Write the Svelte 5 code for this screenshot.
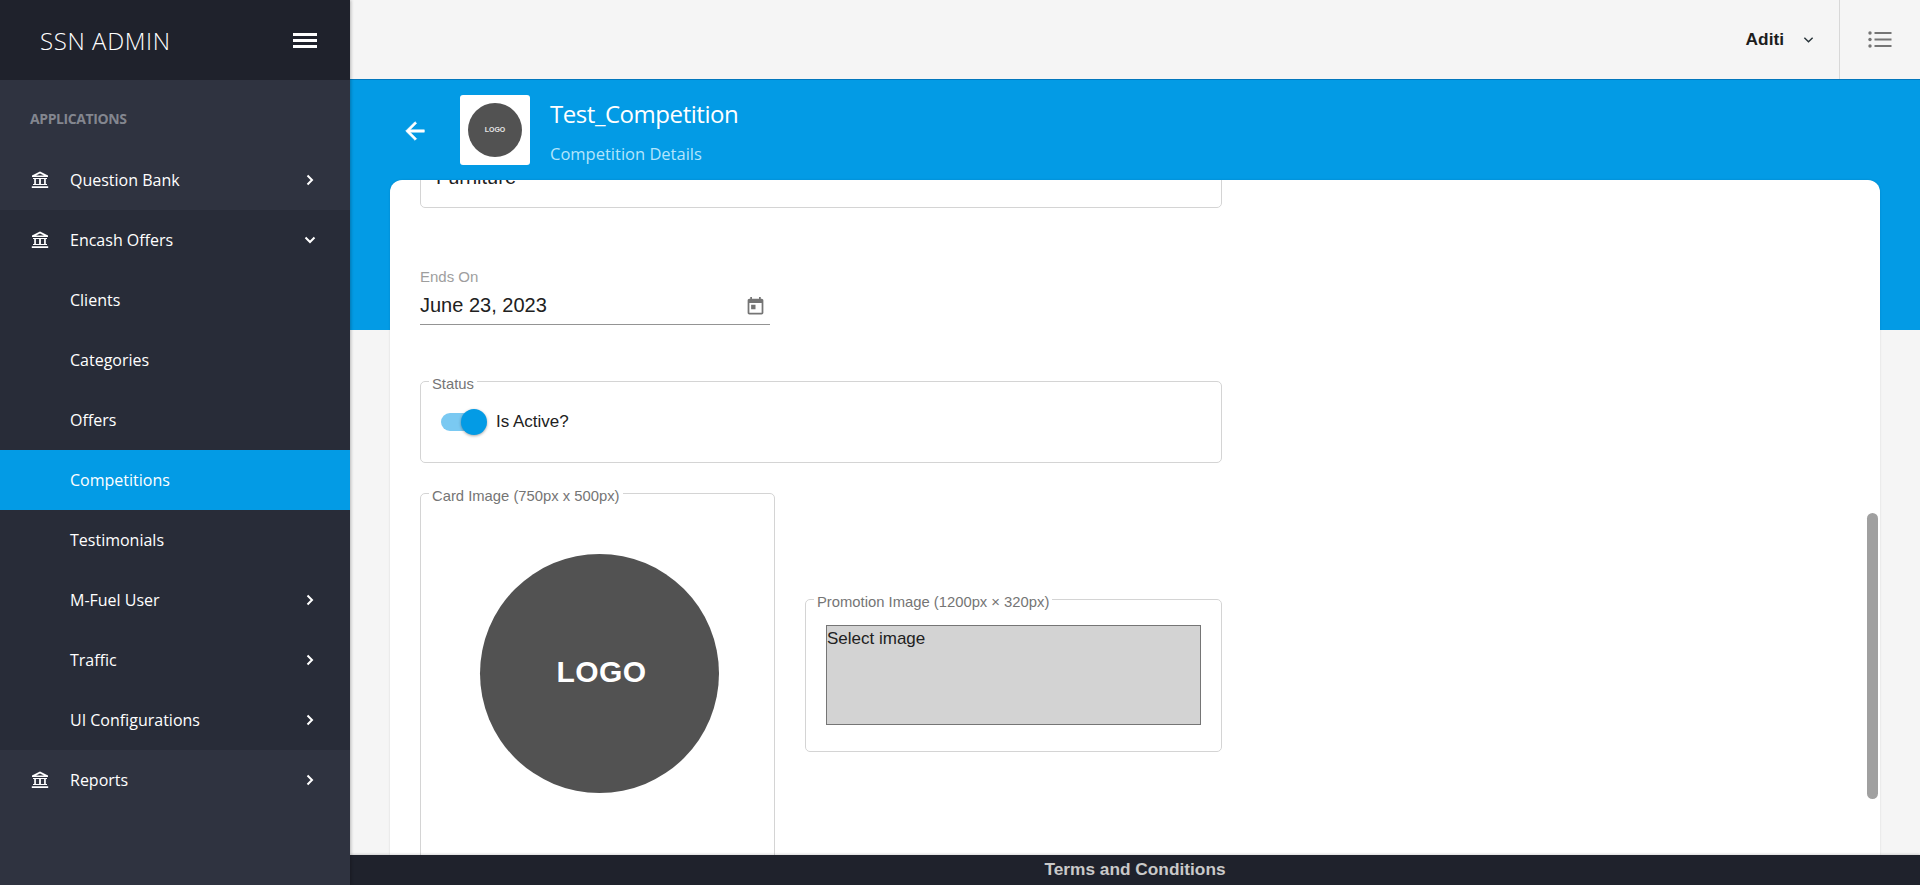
<script lang="ts">
  const topItems = [
    { label: 'Clients' },
    { label: 'Categories' },
    { label: 'Offers' },
    { label: 'Competitions', active: true },
    { label: 'Testimonials' },
    { label: 'M-Fuel User', arrow: true },
    { label: 'Traffic', arrow: true },
    { label: 'UI Configurations', arrow: true }
  ];
</script>

{#snippet bank()}
  <svg class="bank" viewBox="0 0 18 18" aria-hidden="true">
    <path d="M9 .6 17 4.6V6H1V4.6Z" fill="#fff" />
    <path d="M9 2.4 5 4.4h8Z" fill="#2f3340" />
    <path d="M2 7h14v1H2zM3.2 8h1.700v5H3.200zM8.100 8h1.800v5H8.100zM13.100 8h1.700v5h-1.700zM2 13h14v1H2zM.8 15.2h16.400v1.800H.8z" fill="#fff" />
  </svg>
{/snippet}

{#snippet chevronRight()}
  <svg class="chev" viewBox="0 0 10 12" aria-hidden="true"><path d="M2.500 1.500 7 6l-4.500 4.500" /></svg>
{/snippet}

<div class="layout">
  <aside class="sidebar">
    <div class="brand">
      <span class="brand-name">SSN ADMIN</span>
      <div class="burger"><i></i><i></i><i></i></div>
    </div>
    <nav>
      <div class="section">APPLICATIONS</div>
      <a class="item" href="#q">{@render bank()}<span>Question Bank</span>{@render chevronRight()}</a>
      <div class="group">
        <a class="item" href="#e">
          {@render bank()}<span>Encash Offers</span>
          <svg class="chev" viewBox="0 0 12 10" aria-hidden="true"><path d="M1.500 2.500 6 7l4.500-4.500" /></svg>
        </a>
        {#each topItems as it}
          <a class="item sub" class:active={it.active} href="#s">
            <span>{it.label}</span>
            {#if it.arrow}{@render chevronRight()}{/if}
          </a>
        {/each}
      </div>
      <a class="item" href="#r">{@render bank()}<span>Reports</span>{@render chevronRight()}</a>
    </nav>
  </aside>

  <div class="right">
    <header class="topbar">
      <div class="user">
        <strong>Aditi</strong>
        <svg class="user-chev" viewBox="0 0 12 8" aria-hidden="true"><path d="M1.500 1.500 6 6l4.500-4.500" /></svg>
      </div>
      <div class="quick">
        <svg viewBox="0 0 24 17" aria-hidden="true">
          <circle cx="2" cy="2" r="1.700" /><circle cx="2" cy="8.500" r="1.700" /><circle cx="2" cy="15" r="1.700" />
          <path d="M6.500 1h17v2h-17zM6.500 7.500h17v2h-17zM6.500 14h17v2h-17z" />
        </svg>
      </div>
    </header>

    <main class="main">
      <div class="hero">
        <svg class="back" viewBox="0 0 24 24" aria-hidden="true"><path d="M20 11H7.830l5.590-5.590L12 4l-8 8 8 8 1.410-1.410L7.830 13H20z" /></svg>
        <div class="thumb"><div class="logo small">LOGO</div></div>
        <div class="titles">
          <h1>Test_Competition</h1>
          <p>Competition Details</p>
        </div>
      </div>

      <div class="card">
        <div class="form">
          <div class="category">Furniture</div>

          <div class="date">
            <label for="ends">Ends On</label>
            <div class="date-row">
              <span id="ends">June 23, 2023</span>
              <svg viewBox="0 0 24 24" aria-hidden="true"><path d="M19 3h-1V1h-2v2H8V1H6v2H5c-1.110 0-1.990.9-1.990 2L3 19c0 1.100.89 2 2 2h14c1.100 0 2-.9 2-2V5c0-1.100-.9-2-2-2zm0 16H5V8h14v11zM7 10h5v5H7z" /></svg>
            </div>
          </div>

          <fieldset class="status">
            <legend>Status</legend>
            <div class="toggle"><span class="track"></span><span class="knob"></span></div>
            <span class="toggle-label">Is Active?</span>
          </fieldset>

          <div class="images">
            <fieldset class="card-image">
              <legend>Card Image (750px x 500px)</legend>
              <div class="logo big">LOGO</div>
            </fieldset>
            <fieldset class="promo">
              <legend>Promotion Image (1200px × 320px)</legend>
              <div class="picker">Select image</div>
            </fieldset>
          </div>
        </div>
        <div class="scroll-thumb"></div>
      </div>
    </main>

    <footer class="footer">Terms and Conditions</footer>
  </div>
</div>

<style>
  :global(body) {
    margin: 0;
    background: #f5f5f5;
    font-family: "Liberation Sans", Arial, sans-serif;
  }
  .layout {
    display: flex;
    height: 885px;
    overflow: hidden;
  }
  .sidebar {
    width: 350px;
    flex: none;
    background: #2f3340;
    color: #fff;
    font-family: "Open Sans", sans-serif;
    z-index: 2;
    box-shadow: 1px 0 3px rgba(0, 0, 0, 0.25);
  }
  .brand {
    height: 80px;
    background: #1f222c;
    display: flex;
    align-items: center;
    justify-content: space-between;
    padding: 0 33px 0 40px;
  }
  .brand-name {
    font-size: 24px;
    font-weight: 300;
    letter-spacing: 0.6px;
  }
  .burger {
    display: flex;
    flex-direction: column;
    gap: 3px;
    width: 24px;
  }
  .burger i {
    display: block;
    height: 3px;
    background: #fff;
  }
  .section {
    height: 70px;
    box-sizing: border-box;
    padding: 7px 30px 0;
    display: flex;
    align-items: center;
    font-size: 14px;
    font-weight: 700;
    letter-spacing: -0.4px;
    color: #83868f;
  }
  .item {
    height: 60px;
    display: flex;
    align-items: center;
    padding: 0 34px 0 31px;
    color: #fff;
    text-decoration: none;
    font-size: 16px;
  }
  .item span {
    flex: 1;
  }
  .bank {
    width: 18px;
    height: 18px;
    margin-right: 21px;
    flex: none;
  }
  .chev {
    width: 12px;
    height: 12px;
    flex: none;
  }
  .chev path {
    fill: none;
    stroke: #fff;
    stroke-width: 2;
  }
  .group {
    background: #282c38;
  }
  .group .bank path:nth-child(2) {
    fill: #282c38;
  }
  .sub {
    padding-left: 70px;
  }
  .sub.active {
    background: #039be5;
  }

  .right {
    flex: 1;
    min-width: 0;
    display: flex;
    flex-direction: column;
  }
  .topbar {
    height: 80px;
    flex: none;
    box-sizing: border-box;
    background: #f5f5f5;
    display: flex;
    justify-content: flex-end;
    border-bottom: 1px solid #0277bd;
  }
  .user {
    display: flex;
    align-items: center;
    gap: 19px;
    padding-right: 25px;
    font-size: 17.3px;
    color: #1d1d1d;
  }
  .user-chev {
    width: 11px;
    height: 8px;
  }
  .user-chev path {
    fill: none;
    stroke: #263238;
    stroke-width: 1.500;
  }
  .quick {
    width: 80px;
    border-left: 1px solid #d8d8d8;
    display: flex;
    align-items: center;
    justify-content: center;
  }
  .quick svg {
    width: 24px;
    height: 17px;
    fill: #757575;
  }

  .main {
    flex: 1;
    min-height: 0;
    display: flex;
    flex-direction: column;
  }
  .hero {
    height: 250px;
    flex: none;
    box-sizing: border-box;
    background: #039be5;
    color: #fff;
    display: flex;
    align-items: flex-start;
    padding: 15px 0 0 51px;
    font-family: "Open Sans", sans-serif;
  }
  .back {
    width: 28px;
    height: 28px;
    fill: #fff;
    stroke: #fff;
    stroke-width: 0.5;
    margin: 22px 31px 0 0;
    flex: none;
  }
  .thumb {
    width: 70px;
    height: 70px;
    background: #fff;
    border-radius: 3px;
    display: flex;
    align-items: center;
    justify-content: center;
    flex: none;
  }
  .titles {
    margin-left: 20px;
    padding-top: 1px;
  }
  .titles h1 {
    margin: 0;
    font-size: 24px;
    font-weight: 400;
    line-height: 36px;
    letter-spacing: -0.45px;
  }
  .titles p {
    margin: 10px 0 0;
    font-size: 16.5px;
    line-height: 24px;
    color: #b3e5fc;
  }
  .logo {
    border-radius: 50%;
    background: #525252;
    color: #fff;
    font-weight: 700;
    font-family: "Liberation Sans", sans-serif;
    display: flex;
    align-items: center;
    justify-content: center;
  }
  .logo.small {
    width: 54px;
    height: 54px;
    padding-bottom: 2px;
    box-sizing: border-box;
    font-size: 7px;
    color: #e4e4e4;
  }
  .logo.big {
    width: 239px;
    height: 239px;
    font-size: 30px;
    letter-spacing: 0.4px;
    margin: 50px 0 0 59px;
    padding-bottom: 3px;
    padding-left: 4px;
    box-sizing: border-box;
  }

  .card {
    position: relative;
    height: 675px;
    margin: -150px 40px 0;
    background: #fff;
    border-radius: 12px 12px 0 0;
    overflow: hidden;
    flex: none;
    box-shadow: 0 0 2px rgba(0, 0, 0, 0.15);
  }
  /* the form is scrolled: the top of it sits above the card's edge */
  .form {
    width: 802px;
    margin: -30px 0 0 30px;
    color: #212121;
    font-size: 17px;
  }
  fieldset {
    margin: 0;
    box-sizing: border-box;
    border: 1px solid #d4d4d4;
    border-radius: 5px;
    padding: 0;
  }
  legend {
    margin-left: 8px;
    padding: 6px 3px 0;
    font-size: 14.8px;
    line-height: 15px;
    color: #757575;
  }
  .category {
    height: 58px;
    box-sizing: border-box;
    border: 1px solid #d4d4d4;
    border-radius: 5px;
    padding: 14px 15px 0;
    font-size: 20px;
    line-height: 24px;
  }
  .date {
    width: 350px;
    margin-top: 60px;
  }
  .date label {
    display: block;
    font-size: 15px;
    line-height: 18px;
    color: #9e9e9e;
  }
  .date-row {
    height: 39px;
    box-sizing: border-box;
    border-bottom: 1px solid #949494;
    display: flex;
    align-items: center;
    justify-content: space-between;
    font-size: 20px;
    padding: 0 4px 0 0;
  }
  .date-row svg {
    width: 21px;
    height: 21px;
    fill: #757575;
    margin-top: 2px;
  }
  .status {
    height: 92px;
    margin-top: 46px;
    display: flex;
    align-items: center;
    padding-bottom: 11px;
  }
  .toggle {
    position: relative;
    width: 46px;
    height: 26px;
    margin: 0 9px 0 20px;
    flex: none;
  }
  .toggle-label {
    padding-top: 1px;
  }
  .track {
    position: absolute;
    left: 0;
    top: 4px;
    width: 36px;
    height: 18px;
    border-radius: 9px;
    background: #7ac9f2;
  }
  .knob {
    position: absolute;
    right: 0;
    top: 0;
    width: 26px;
    height: 26px;
    border-radius: 50%;
    background: #039be5;
    box-shadow: 0 1px 3px rgba(0, 0, 0, 0.35);
  }
  .images {
    display: flex;
    align-items: flex-start;
    gap: 30px;
    margin-top: 20px;
  }
  .card-image {
    width: 355px;
    height: 430px;
    flex: none;
  }
  .promo {
    flex: 1;
    height: 163px;
    margin-top: 106px;
  }
  .picker {
    height: 100px;
    margin: 15px 20px 0;
    box-sizing: border-box;
    border: 1px solid #757575;
    background: #d3d3d3;
    line-height: 26px;
    font-size: 17px;
  }
  .scroll-thumb {
    position: absolute;
    right: 2px;
    top: 333px;
    width: 11px;
    height: 286px;
    border-radius: 6px;
    background: #a0a0a0;
  }
  .footer {
    height: 30px;
    flex: none;
    background: #1f222c;
    color: #c9c9c9;
    font-size: 17.3px;
    font-weight: 700;
    display: flex;
    align-items: center;
    justify-content: center;
    position: relative;
    padding-bottom: 1px;
    box-sizing: border-box;
    box-shadow: 0 -1px 2px rgba(0, 0, 0, 0.15);
  }
</style>
